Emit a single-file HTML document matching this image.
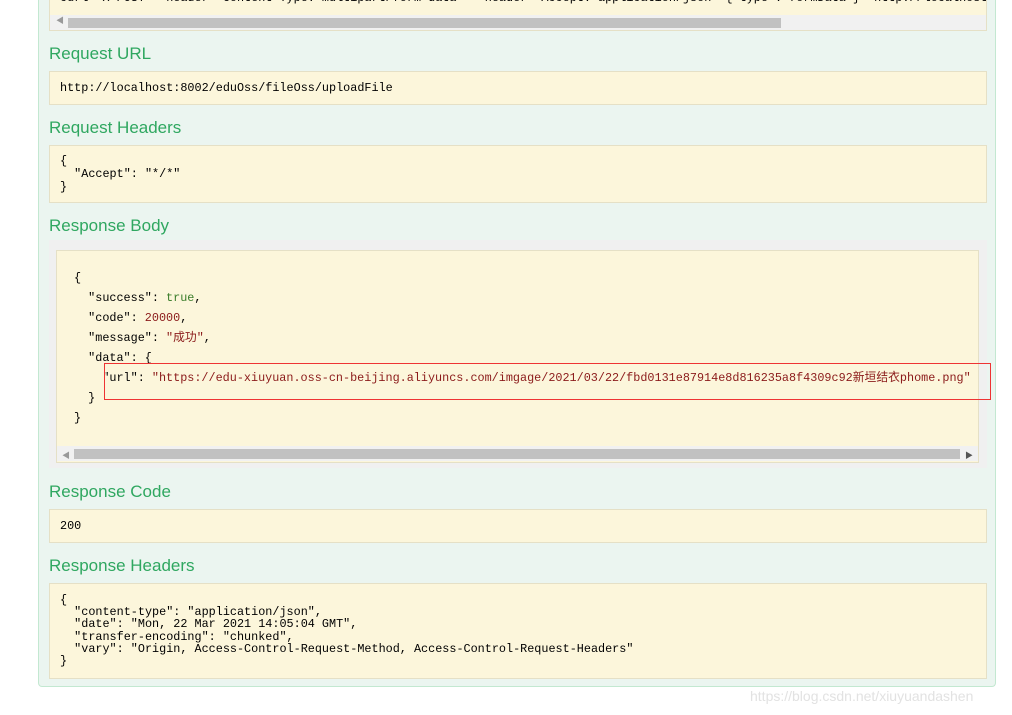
<!DOCTYPE html>
<html><head><meta charset="utf-8"><style>
body{margin:0;width:1012px;height:715px;background:#fff;position:relative;overflow:hidden;font-family:"Liberation Sans","Noto Sans CJK SC",sans-serif}
.panel{position:absolute;left:38px;top:-10px;width:958px;height:697px;background:#ebf5f0;border:1px solid #c3e8d1;border-top:none;border-radius:0 0 4px 4px;box-sizing:border-box}
.h{position:absolute;left:49px;font-size:17px;color:#2fa760}
.blk{position:absolute;left:49px;width:938px;background:#fcf6db;border:1px solid #e5e0c6;box-sizing:border-box;font-family:"Liberation Mono","Noto Sans CJK SC",monospace;font-size:11.8px;color:#000;white-space:pre;overflow:hidden}
.sb{position:absolute;height:15px;background:#f1f1f1}
.th{position:absolute;top:3px;height:10px;background:#c1c1c1}
.s{color:#333}
.k{color:#000}
.str{color:#a31515;color:#8b1a1a}
.b{color:#3a7d2a}
.n{color:#a11}
</style></head><body>
<div class="panel"></div>
<div class="blk" style="top:-10px;height:41px;">
<div style="position:absolute;left:10px;top:0;">curl -X POST --header 'Content-Type: multipart/form-data' --header 'Accept: application/json' {"type":"formData"} 'http://localhost</div>
<div class="sb" style="left:0;top:24px;width:936px;"><div class="th" style="left:18px;width:713px;"></div><span style="position:absolute;left:6px;top:0;font-size:8px;color:#999">&#9664;</span></div>
</div>
<div class="h" style="top:44px">Request URL</div>
<div class="blk" style="top:71px;height:34px;"><div style="position:absolute;left:10px;top:9px">http://localhost:8002/eduOss/fileOss/uploadFile</div></div>
<div class="h" style="top:118px">Request Headers</div>
<div class="blk" style="top:145px;height:58px;line-height:13px"><div style="position:absolute;left:10px;top:9px">{
  "Accept": "*/*"
}</div></div>
<div class="h" style="top:216px">Response Body</div>
<div style="position:absolute;left:49px;top:240px;width:938px;height:228px;background:#f0f0f0"></div>
<div class="blk" style="left:56px;top:250px;width:923px;height:213px;line-height:20px"><div style="position:absolute;left:17px;top:17px">{
  "success": <span class="b">true</span>,
  "code": <span class="str">20000</span>,
  "message": <span class="str">"成功"</span>,
  "data": {
    "url": <span class="str">"https://edu-xiuyuan.oss-cn-beijing.aliyuncs.com/imgage/2021/03/22/fbd0131e87914e8d816235a8f4309c92新垣结衣phome.png"</span>
  }
}</div>
<div class="sb" style="left:0;top:195px;width:921px;"><div class="th" style="left:17px;width:886px;"></div><span style="position:absolute;left:5px;top:1px;font-size:8px;color:#999">&#9664;</span><span style="position:absolute;right:5px;top:1px;font-size:8px;color:#555">&#9654;</span></div>
</div>
<div style="position:absolute;left:104px;top:363px;width:887px;height:37px;border:1px solid #e33;box-sizing:border-box"></div>
<div class="h" style="top:482px">Response Code</div>
<div class="blk" style="top:509px;height:34px;"><div style="position:absolute;left:10px;top:9px">200</div></div>
<div class="h" style="top:556px">Response Headers</div>
<div class="blk" style="top:583px;height:96px;line-height:12.2px"><div style="position:absolute;left:10px;top:10px">{
  "content-type": "application/json",
  "date": "Mon, 22 Mar 2021 14:05:04 GMT",
  "transfer-encoding": "chunked",
  "vary": "Origin, Access-Control-Request-Method, Access-Control-Request-Headers"
}</div></div>
<div style="position:absolute;left:750px;top:688px;font-size:14px;color:#e2e2e2">https://blog.csdn.net/xiuyuandashen</div>
</body></html>
